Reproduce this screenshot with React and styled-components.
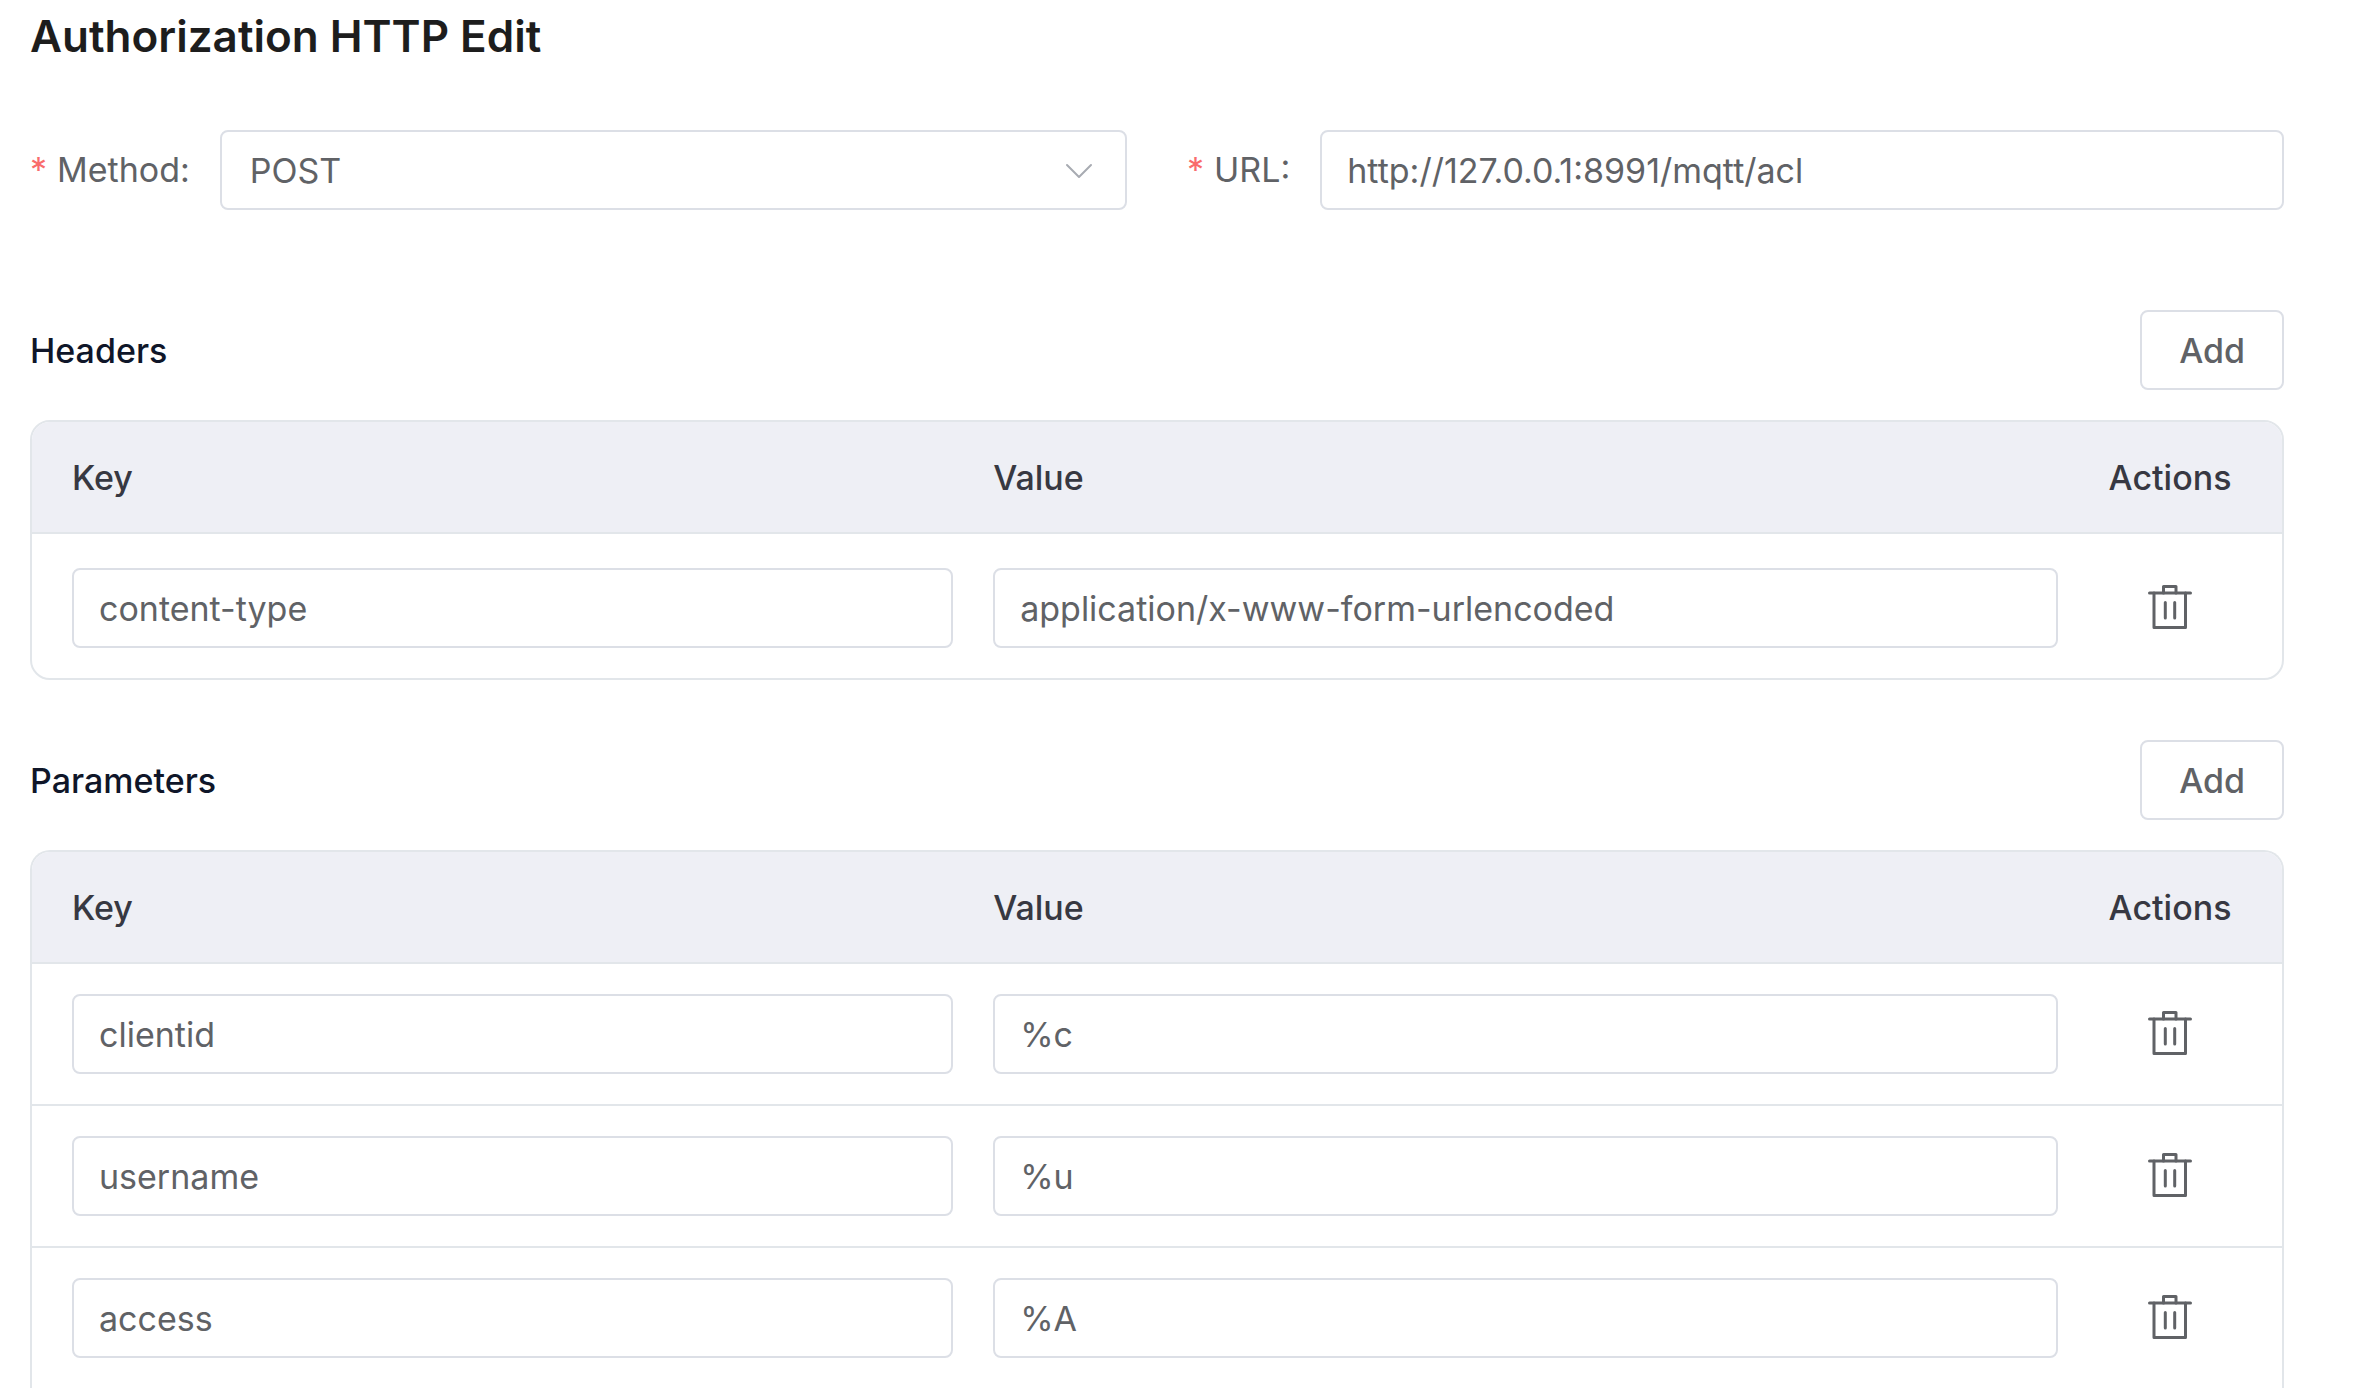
import React, { useId, useState } from 'react';
import styled, { createGlobalStyle } from 'styled-components';

const COLORS = {
  title: '#1d1d1d',
  heading: '#0f1629',
  tableHeading: '#373842',
  text: '#606266',
  border: '#dcdfe6',
  tableBorder: '#e2e6ea',
  tableHeader: '#eeeff5',
  muted: '#a8abb2',
  danger: '#f96c6c',
};

const initialHeaders = [
  { key: 'content-type', value: 'application/x-www-form-urlencoded' },
];

const initialParameters = [
  { key: 'clientid', value: '%c' },
  { key: 'username', value: '%u' },
  { key: 'access', value: '%A' },
];

function TrashIcon() {
  return (
    <svg
      width="44"
      height="44"
      viewBox="0 0 44 44"
      fill="none"
      stroke="currentColor"
      strokeWidth="3"
      strokeLinecap="round"
      strokeLinejoin="round"
      aria-hidden="true"
    >
      <path d="M1.5 8h41" />
      <path d="M6 8v34.5h31.5V8" />
      <path d="M15.5 8V1.5H28V8" />
      <path d="M17.3 17.5V33M26.700 17.5V33" />
    </svg>
  );
}

function ChevronIcon() {
  return (
    <svg width="28" height="16" viewBox="0 0 28 16" fill="none" aria-hidden="true">
      <path
        d="M2 2l12 12L26 2"
        stroke="currentColor"
        strokeWidth="2"
        strokeLinecap="round"
        strokeLinejoin="round"
      />
    </svg>
  );
}

function PairTable({ title, initialRows, roomy, continues }) {
  const [rows, setRows] = useState(initialRows);

  const update = (index, field) => (event) => {
    const { value } = event.target;
    setRows(rows.map((row, i) => (i === index ? { ...row, [field]: value } : row)));
  };

  return (
    <Section>
      <SectionHeader>
        <SectionTitle>{title}</SectionTitle>
        <AddButton type="button" onClick={() => setRows([...rows, { key: '', value: '' }])}>
          Add
        </AddButton>
      </SectionHeader>
      <Table $continues={continues}>
        <thead>
          <HeadRow>
            <HeadCell>Key</HeadCell>
            <HeadCell>Value</HeadCell>
            <HeadCell $center>Actions</HeadCell>
          </HeadRow>
        </thead>
        <tbody>
          {rows.map((row, index) => (
            <BodyRow key={index} $roomy={roomy}>
              <Cell>
                <Input aria-label="Key" value={row.key} onChange={update(index, 'key')} />
              </Cell>
              <Cell>
                <Input aria-label="Value" value={row.value} onChange={update(index, 'value')} />
              </Cell>
              <Cell $center>
                <IconButton
                  type="button"
                  aria-label="Delete"
                  onClick={() => setRows(rows.filter((_, i) => i !== index))}
                >
                  <TrashIcon />
                </IconButton>
              </Cell>
            </BodyRow>
          ))}
        </tbody>
      </Table>
    </Section>
  );
}

function App() {
  const id = useId();
  const [method, setMethod] = useState('POST');
  const [url, setUrl] = useState('http://127.0.0.1:8991/mqtt/acl');

  return (
    <>
      <GlobalStyle />
      <Page>
        <Title>Authorization HTTP Edit</Title>
        <FormRow>
          <Field>
            <Label htmlFor={`${id}-method`}>
              <Required>*</Required>
              Method:
            </Label>
            <SelectWrapper>
              <Select
                id={`${id}-method`}
                value={method}
                onChange={(event) => setMethod(event.target.value)}
              >
                <option>POST</option>
                <option>GET</option>
              </Select>
              <ChevronIcon />
            </SelectWrapper>
          </Field>
          <Field>
            <Label htmlFor={`${id}-url`}>
              <Required>*</Required>
              URL:
            </Label>
            <Input
              id={`${id}-url`}
              value={url}
              onChange={(event) => setUrl(event.target.value)}
            />
          </Field>
        </FormRow>
        <PairTable title="Headers" initialRows={initialHeaders} roomy />
        <PairTable title="Parameters" initialRows={initialParameters} continues />
      </Page>
    </>
  );
}

const GlobalStyle = createGlobalStyle`
  *, *::before, *::after {
    box-sizing: border-box;
  }

  body {
    margin: 0;
    background: white;
    color: ${COLORS.text};
    font-family: Inter, 'Liberation Sans', sans-serif;
    font-size: 34px;
  }

  button, input, select {
    font: inherit;
    color: inherit;
  }
`;

const Page = styled.main`
  padding: 0 78px 0 30px;
`;

const Title = styled.h1`
  margin: 0 0 58px;
  font-size: 44px;
  font-weight: 600;
  line-height: 72px;
  color: ${COLORS.title};
`;

const FormRow = styled.div`
  display: grid;
  grid-template-columns: 1fr 1fr;
  gap: 60px;
  margin-bottom: 100px;
`;

const Field = styled.div`
  display: flex;
  align-items: center;
  gap: 30px;
`;

const Label = styled.label`
  display: flex;
  gap: 10px;
  flex-shrink: 0;
  line-height: 80px;
`;

const Required = styled.span`
  color: ${COLORS.danger};
`;

const Input = styled.input`
  display: block;
  width: 100%;
  min-width: 0;
  height: 80px;
  padding: 0 25px;
  border: 2px solid ${COLORS.border};
  border-radius: 8px;
  background: white;
  outline: none;

  &:focus {
    border-color: ${COLORS.muted};
  }
`;

const SelectWrapper = styled.div`
  position: relative;
  flex: 1;
  color: ${COLORS.text};

  svg {
    position: absolute;
    top: 50%;
    right: 34px;
    margin-top: -7px;
    color: ${COLORS.muted};
    pointer-events: none;
  }
`;

const Select = styled(Input).attrs({ as: 'select' })`
  appearance: none;
  padding: 0 28px;
`;

const Section = styled.section`
  & + & {
    margin-top: 60px;
  }
`;

const SectionHeader = styled.div`
  display: flex;
  align-items: center;
  justify-content: space-between;
  margin-bottom: 30px;
`;

const SectionTitle = styled.h2`
  margin: 0;
  font-size: 34px;
  font-weight: 500;
  color: ${COLORS.heading};
`;

const AddButton = styled.button`
  height: 80px;
  padding: 0 37px;
  border: 2px solid ${COLORS.border};
  border-radius: 8px;
  background: white;
  font-weight: 500;
  cursor: pointer;
`;

const Table = styled.table`
  display: block;
  overflow: hidden;
  border: 2px solid ${COLORS.tableBorder};
  border-radius: 20px;
  border-bottom-width: ${(p) => (p.$continues ? 0 : '2px')};
  border-bottom-left-radius: ${(p) => (p.$continues ? 0 : '20px')};
  border-bottom-right-radius: ${(p) => (p.$continues ? 0 : '20px')};

  thead,
  tbody {
    display: block;
  }
`;

const Row = styled.tr`
  display: grid;
  grid-template-columns: 46fr 54fr 204px;
  align-items: center;
`;

const HeadRow = styled(Row)`
  height: 112px;
  border-bottom: 2px solid ${COLORS.tableBorder};
  background: ${COLORS.tableHeader};
`;

const BodyRow = styled(Row)`
  padding: ${(p) => (p.$roomy ? '34px 0 30px' : '30px 0')};

  &:not(:last-child) {
    border-bottom: 2px solid ${COLORS.tableBorder};
  }
`;

const Cell = styled.td`
  display: flex;
  justify-content: ${(p) => (p.$center ? 'center' : 'flex-start')};
  padding: 0 20px;

  &:first-child {
    padding-left: 40px;
  }

  &:last-child {
    padding-right: 40px;
  }
`;

const HeadCell = styled(Cell).attrs({ as: 'th' })`
  font-weight: 500;
  color: ${COLORS.tableHeading};
`;

const IconButton = styled.button`
  display: flex;
  padding: 0 0 2px;
  border: none;
  background: none;
  cursor: pointer;
`;

export default App;
